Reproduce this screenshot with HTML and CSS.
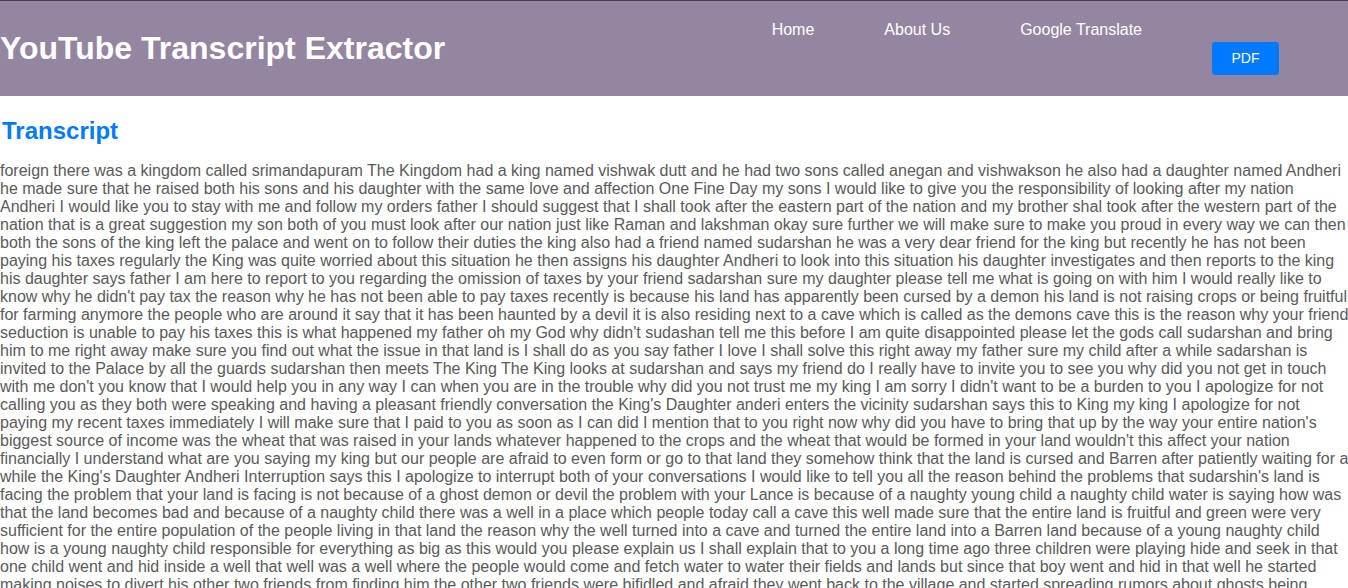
FILE: index.html
```html
<!DOCTYPE html>
<html lang="en">
<head>
<meta charset="utf-8">
<title>YouTube Transcript Extractor</title>
<link rel="stylesheet" href="styles.css">
</head>
<body>
<header class="site-header">
  <h1 class="site-title">YouTube Transcript Extractor</h1>
  <nav class="site-nav">
    <ul class="nav-list">
      <li class="nav-item"><a class="nav-link" href="#">Home</a></li>
      <li class="nav-item"><a class="nav-link" href="#">About Us</a></li>
      <li class="nav-item"><a class="nav-link" href="#">Google Translate</a></li>
      <li class="nav-item"><button class="pdf-btn" type="button">PDF</button></li>
    </ul>
  </nav>
</header>
<main class="content">
  <h2 class="section-title">Transcript</h2>
  <p class="transcript">foreign there was a kingdom called srimandapuram The Kingdom had a king named vishwak dutt and he had two sons called anegan and vishwakson he also had a daughter named Andheri<br>
he made sure that he raised both his sons and his daughter with the same love and affection One Fine Day my sons I would like to give you the responsibility of looking after my nation<br>
Andheri I would like you to stay with me and follow my orders father I should suggest that I shall took after the eastern part of the nation and my brother shal took after the western part of the<br>
nation that is a great suggestion my son both of you must look after our nation just like Raman and lakshman okay sure further we will make sure to make you proud in every way we can then<br>
both the sons of the king left the palace and went on to follow their duties the king also had a friend named sudarshan he was a very dear friend for the king but recently he has not been<br>
paying his taxes regularly the King was quite worried about this situation he then assigns his daughter Andheri to look into this situation his daughter investigates and then reports to the king<br>
his daughter says father I am here to report to you regarding the omission of taxes by your friend sadarshan sure my daughter please tell me what is going on with him I would really like to<br>
know why he didn't pay tax the reason why he has not been able to pay taxes recently is because his land has apparently been cursed by a demon his land is not raising crops or being fruitful<br>
for farming anymore the people who are around it say that it has been haunted by a devil it is also residing next to a cave which is called as the demons cave this is the reason why your friend<br>
seduction is unable to pay his taxes this is what happened my father oh my God why didn't sudashan tell me this before I am quite disappointed please let the gods call sudarshan and bring<br>
him to me right away make sure you find out what the issue in that land is I shall do as you say father I love I shall solve this right away my father sure my child after a while sadarshan is<br>
invited to the Palace by all the guards sudarshan then meets The King The King looks at sudarshan and says my friend do I really have to invite you to see you why did you not get in touch<br>
with me don't you know that I would help you in any way I can when you are in the trouble why did you not trust me my king I am sorry I didn't want to be a burden to you I apologize for not<br>
calling you as they both were speaking and having a pleasant friendly conversation the King's Daughter anderi enters the vicinity sudarshan says this to King my king I apologize for not<br>
paying my recent taxes immediately I will make sure that I paid to you as soon as I can did I mention that to you right now why did you have to bring that up by the way your entire nation's<br>
biggest source of income was the wheat that was raised in your lands whatever happened to the crops and the wheat that would be formed in your land wouldn't this affect your nation<br>
financially I understand what are you saying my king but our people are afraid to even form or go to that land they somehow think that the land is cursed and Barren after patiently waiting for a<br>
while the King's Daughter Andheri Interruption says this I apologize to interrupt both of your conversations I would like to tell you all the reason behind the problems that sudarshin's land is<br>
facing the problem that your land is facing is not because of a ghost demon or devil the problem with your Lance is because of a naughty young child a naughty child water is saying how was<br>
that the land becomes bad and because of a naughty child there was a well in a place which people today call a cave this well made sure that the entire land is fruitful and green were very<br>
sufficient for the entire population of the people living in that land the reason why the well turned into a cave and turned the entire land into a Barren land because of a young naughty child<br>
how is a young naughty child responsible for everything as big as this would you please explain us I shall explain that to you a long time ago three children were playing hide and seek in that<br>
one child went and hid inside a well that well was a well where the people would come and fetch water to water their fields and lands but since that boy went and hid in that well he started<br>
making noises to divert his other two friends from finding him the other two friends were bifidled and afraid they went back to the village and started spreading rumors about ghosts being</p>
</main>
</body>
</html>
```
FILE: styles.css
```css
html, body {
  margin: 0;
  padding: 0;
  background: #ffffff;
  font-family: "Liberation Sans", Arial, sans-serif;
}

.site-header {
  display: flex;
  justify-content: space-between;
  align-items: flex-start;
  height: 95px;
  background: #9486a0;
  border-top: 1px solid #444444;
  padding: 0 34px 0 0;
}

.site-title {
  margin: 29px 0 0 0;
  font-size: 32px;
  line-height: 37px;
  font-weight: bold;
  color: #ffffff;
}

.nav-list {
  display: flex;
  align-items: flex-start;
  list-style: none;
  margin: 20px 0 0 0;
  padding: 0;
}

.nav-item {
  padding: 0 35px;
}

.nav-link {
  display: block;
  color: #ffffff;
  text-decoration: none;
  font-size: 16px;
  line-height: 18px;
}

.pdf-btn {
  display: block;
  margin-top: 21px;
  width: 67px;
  height: 33px;
  padding: 0;
  border: none;
  border-radius: 3px;
  background: #007bff;
  color: #ffffff;
  font-family: "Liberation Sans", Arial, sans-serif;
  font-size: 14px;
  line-height: 33px;
  text-align: center;
}

.content {
  padding: 0;
}

.section-title {
  margin: 21px 0 17px 2px;
  font-size: 24px;
  line-height: 28px;
  font-weight: bold;
  color: #007bff;
}

.transcript {
  margin: 0;
  font-size: 16px;
  line-height: 18px;
  color: #5a5a5a;
  white-space: nowrap;
  overflow: hidden;
}
```
